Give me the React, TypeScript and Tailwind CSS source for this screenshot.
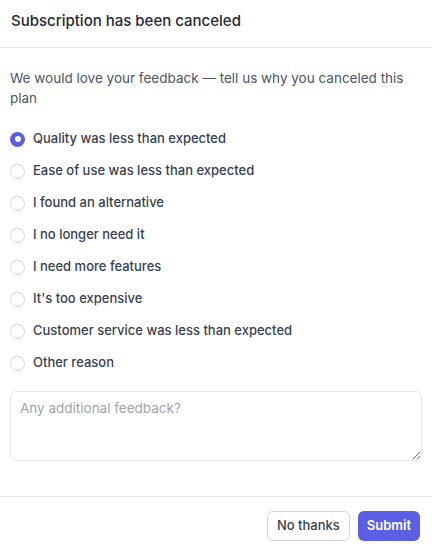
const reasons = [
  'Quality was less than expected',
  'Ease of use was less than expected',
  'I found an alternative',
  'I no longer need it',
  'I need more features',
  "It's too expensive",
  'Customer service was less than expected',
  'Other reason',
];

export default function App() {
  const selected = 0;

  return (
    <div className="w-[432px] h-[548px] bg-white flex flex-col font-['Inter',sans-serif]">
      {/* Header */}
      <div className="h-[48px] px-[11px] flex items-center border-b border-[#e5e7eb]">
        <h2 className="text-[15px] font-medium text-[#1f2937] -mt-[5px]">Subscription has been canceled</h2>
      </div>

      {/* Body */}
      <div className="flex-1 px-[10px] pt-[20px]">
        <p className="text-[13.5px] leading-[20px] text-[#4b5563]">
          We would love your feedback — tell us why you canceled this plan
        </p>

        <div className="mt-[15px] flex flex-col">
          {reasons.map((r, i) => (
            <label key={r} className="h-[32px] flex items-center gap-[8px]">
              {i === selected ? (
                <span className="w-[15px] h-[15px] rounded-full bg-[#5b5fe3] flex items-center justify-center">
                  <span className="w-[6px] h-[6px] rounded-full bg-white" />
                </span>
              ) : (
                <span className="w-[15px] h-[15px] rounded-full border border-[#d1d5db] bg-white" />
              )}
              <span className="text-[13px] font-medium text-[#374151]">{r}</span>
            </label>
          ))}
        </div>

        <textarea
          placeholder="Any additional feedback?"
          className="mt-[12px] w-full h-[70px] rounded-md border border-[#e5e7eb] px-[9px] py-[6px] text-[13.5px] text-[#374151] placeholder:text-[#9ca3af] outline-none"
        />
      </div>

      {/* Footer */}
      <div className="border-t border-[#e5e7eb] h-[52px] px-[12px] pt-[14px] flex items-start justify-end gap-[8px]">
        <button className="h-[30px] px-[9px] rounded-md border border-[#d1d5db] bg-white text-[13px] font-medium text-[#374151]">
          No thanks
        </button>
        <button className="h-[30px] px-[9px] rounded-md bg-[#5b5fe3] text-[13px] font-semibold text-white">
          Submit
        </button>
      </div>
    </div>
  );
}
